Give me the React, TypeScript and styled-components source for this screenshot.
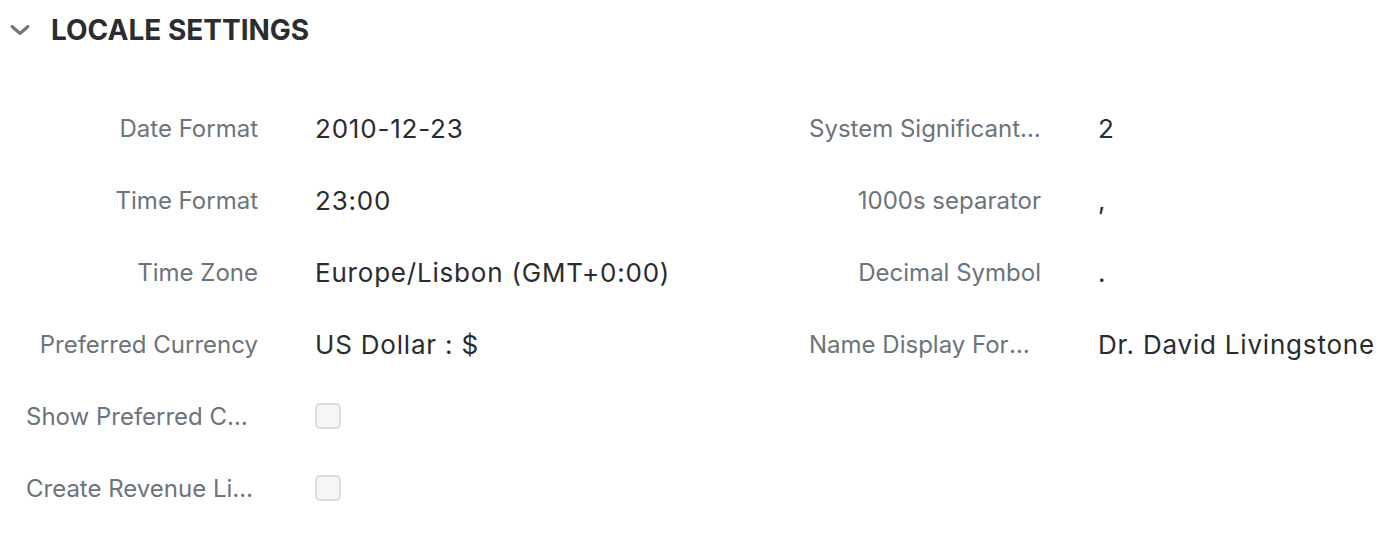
import React from 'react'
import styled, {createGlobalStyle} from 'styled-components'

type FieldData = {
  label: string,
  value?: string,
  checkbox?: boolean,
}

const leftFields: Array<FieldData> = [
  {label: 'Date Format', value: '2010-12-23'},
  {label: 'Time Format', value: '23:00'},
  {label: 'Time Zone', value: 'Europe/Lisbon (GMT+0:00)'},
  {label: 'Preferred Currency', value: 'US Dollar : $'},
  {label: 'Show Preferred Currency', checkbox: true},
  {label: 'Create Revenue Line Items', checkbox: true},
]

const rightFields: Array<FieldData> = [
  {label: 'System Significant Digits', value: '2'},
  {label: '1000s separator', value: ','},
  {label: 'Decimal Symbol', value: '.'},
  {label: 'Name Display Format', value: 'Dr. David Livingstone'},
]

const Field: React.FC<{field: FieldData}> = ({field}) => (
  <Row>
    <Label title={field.label}>{field.label}</Label>
    {field.checkbox ? <Checkbox type="checkbox" /> : <Value>{field.value}</Value>}
  </Row>
)

export default function App() {
  return (
    <>
      <GlobalStyle />
      <Section>
        <Header>
          <svg width="20" height="10" viewBox="0 0 20 10">
            <path d="M2 1.5 L10 8.5 L18 1.5" fill="none" stroke="#6b7680" strokeWidth="3" strokeLinecap="round" strokeLinejoin="round" />
          </svg>
          <Title>LOCALE SETTINGS</Title>
        </Header>
        <Body>
          <Column>
            {leftFields.map((f) => <Field key={f.label} field={f} />)}
          </Column>
          <Column>
            {rightFields.map((f) => <Field key={f.label} field={f} />)}
          </Column>
        </Body>
      </Section>
    </>
  )
}

const GlobalStyle = createGlobalStyle`
  body {
    margin: 0;
    background: #ffffff;
    font-family: Inter, "Noto Sans", sans-serif;
  }
`

const Section = styled.section`
  width: 1398px;
`

const Header = styled.div`
  display: flex;
  align-items: center;
  gap: 21px;
  height: 60px;
  padding-left: 10px;
`

const Title = styled.h2`
  margin: 0;
  font-size: 28px;
  font-weight: 700;
  color: #2b2d2f;
`

const Body = styled.div`
  display: grid;
  grid-template-columns: 783px 1fr;
  padding-top: 32px;
`

const Column = styled.div`
  display: flex;
  flex-direction: column;
`

const Row = styled.div`
  display: grid;
  grid-template-columns: 232px 1fr;
  column-gap: 57px;
  align-items: center;
  height: 72px;
  padding-left: 26px;
`

const Label = styled.span`
  text-align: right;
  white-space: nowrap;
  overflow: hidden;
  text-overflow: ellipsis;
  font-size: 24px;
  color: #6b747b;
`

const Value = styled.span`
  white-space: nowrap;
  font-size: 26px;
  letter-spacing: 0.8px;
  color: #2a2c2e;
`

const Checkbox = styled.input`
  appearance: none;
  margin: 0;
  width: 26px;
  height: 26px;
  border: 2px solid #dcdcdc;
  border-radius: 5px;
  background: #f6f6f6;
`
